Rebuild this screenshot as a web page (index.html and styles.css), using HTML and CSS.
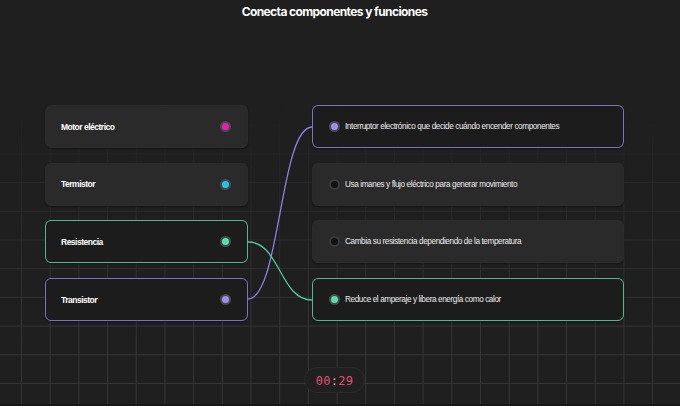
FILE: index.html
```html
<!DOCTYPE html>
<html lang="es">
<head>
  <meta charset="UTF-8">
  <meta name="viewport" content="width=device-width, initial-scale=1.0">
  <title>Conecta componentes y funciones</title>
  <link rel="stylesheet" href="styles.css">
</head>
<body>

<div class="grid-bg"></div>

<main class="game">
  <h1 class="title">Conecta componentes y funciones</h1>

  <section class="board">
    <div class="column left">
      <div class="card">
        <span class="label">Motor eléctrico</span>
        <span class="dot magenta"></span>
      </div>
      <div class="card">
        <span class="label">Termistor</span>
        <span class="dot cyan"></span>
      </div>
      <div class="card linked-green">
        <span class="label">Resistencia</span>
        <span class="dot green"></span>
      </div>
      <div class="card linked-purple">
        <span class="label">Transistor</span>
        <span class="dot purple"></span>
      </div>
    </div>

    <div class="column right">
      <div class="card linked-purple">
        <span class="dot purple"></span>
        <span class="desc">Interruptor electrónico que decide cuándo encender componentes</span>
      </div>
      <div class="card">
        <span class="dot empty"></span>
        <span class="desc">Usa imanes y flujo eléctrico para generar movimiento</span>
      </div>
      <div class="card">
        <span class="dot empty"></span>
        <span class="desc">Cambia su resistencia dependiendo de la temperatura</span>
      </div>
      <div class="card linked-green">
        <span class="dot green"></span>
        <span class="desc">Reduce el amperaje y libera energía como calor</span>
      </div>
    </div>

    <!-- connection wires -->
    <svg class="wires" width="579" height="217" viewBox="0 0 579 217">
      <path d="M203 194 C 235 194, 235 22, 267 22" stroke="#8f82e6" />
      <path d="M203 137 C 235 137, 235 195, 267 195" stroke="#52c89c" />
    </svg>
  </section>

  <div class="timer">00<span class="colon">:</span>29</div>
</main>

</body>
</html>
```

FILE: styles.css
```css
/* Basic reset */
*, *::before, *::after {
  box-sizing: border-box;
}

html, body {
  margin: 0;
  padding: 0;
}

body {
  background: #1f1f1f;
  color: #ffffff;
  font-family: 'Liberation Sans', Arial, sans-serif;
  height: 406px;
  overflow: hidden;
  position: relative;
}

/* Background grid, fading in towards the bottom */
.grid-bg {
  position: absolute;
  inset: 0 0 2px 0;
  background-image:
    linear-gradient(to right, #363636 1px, transparent 1px),
    linear-gradient(to bottom, #363636 1px, transparent 1px);
  background-size: 28.7px 28.7px;
  background-position: 21px 10px;
  -webkit-mask-image: linear-gradient(to bottom, transparent 25%, rgba(0,0,0,0.45) 50%, #000 85%);
  mask-image: linear-gradient(to bottom, transparent 25%, rgba(0,0,0,0.45) 50%, #000 85%);
}

body::after {
  content: "";
  position: absolute;
  left: 0;
  right: 0;
  bottom: 0;
  height: 2px;
  background: #171717;
}

.game {
  position: relative;
  width: 669px;
  display: flex;
  flex-direction: column;
  align-items: center;
}

.title {
  margin: 4px 0 0;
  font-family: Inter, 'Liberation Sans', sans-serif;
  font-size: 12px;
  font-weight: 700;
  letter-spacing: -0.6px;
  line-height: 15px;
}

/* Board */
.board {
  position: relative;
  display: flex;
  gap: 64px;
  margin-top: 86px;
}

.column {
  display: flex;
  flex-direction: column;
  gap: 14.7px;
}

.column.left {
  width: 203px;
}

.column.right {
  width: 312px;
}

.card {
  height: 43px;
  display: flex;
  align-items: center;
  background: #2a2a2a;
  border: 1px solid #2c2c2c;
  border-radius: 6px;
  box-shadow: 0 1px 2px rgba(0, 0, 0, 0.35);
}

.left .card {
  justify-content: space-between;
  padding: 0 16px 0 15px;
}

.right .card {
  padding: 0 0 0 16px;
  gap: 5px;
}

.card.linked-green {
  background: #1c1c1c;
  border-color: #52b892;
}

.card.linked-purple {
  background: #1c1c1c;
  border-color: #7c71c2;
}

.label {
  font-size: 8.5px;
  font-weight: 700;
  letter-spacing: -0.5px;
}

.desc {
  font-size: 8.2px;
  color: #ededed;
  letter-spacing: -0.4px;
}

/* Connector dots */
.dot {
  width: 11px;
  height: 11px;
  border-radius: 50%;
  border: 2px solid #4a4a4a;
  flex-shrink: 0;
}

.dot.magenta { background: #e81cb4; }
.dot.cyan { background: #1ec6ea; }
.dot.green { background: #4fe3aa; }
.dot.purple { background: #9d8ef5; }
.dot.empty { background: #121212; border-color: #3a3a3a; }

.wires {
  position: absolute;
  top: 0;
  left: 0;
  pointer-events: none;
}

.wires path {
  fill: none;
  stroke-width: 1.3;
}

/* Timer */
.timer {
  margin-top: 46px;
  padding: 0 11px;
  height: 26px;
  line-height: 26px;
  border-radius: 13px;
  background: #202020;
  border: 1px solid #2b2b2b;
  color: #e04d76;
  font-family: 'DejaVu Sans Mono', monospace;
  font-size: 12px;
  letter-spacing: 0.3px;
}

.timer .colon {
  color: #d9a0b4;
}
```
